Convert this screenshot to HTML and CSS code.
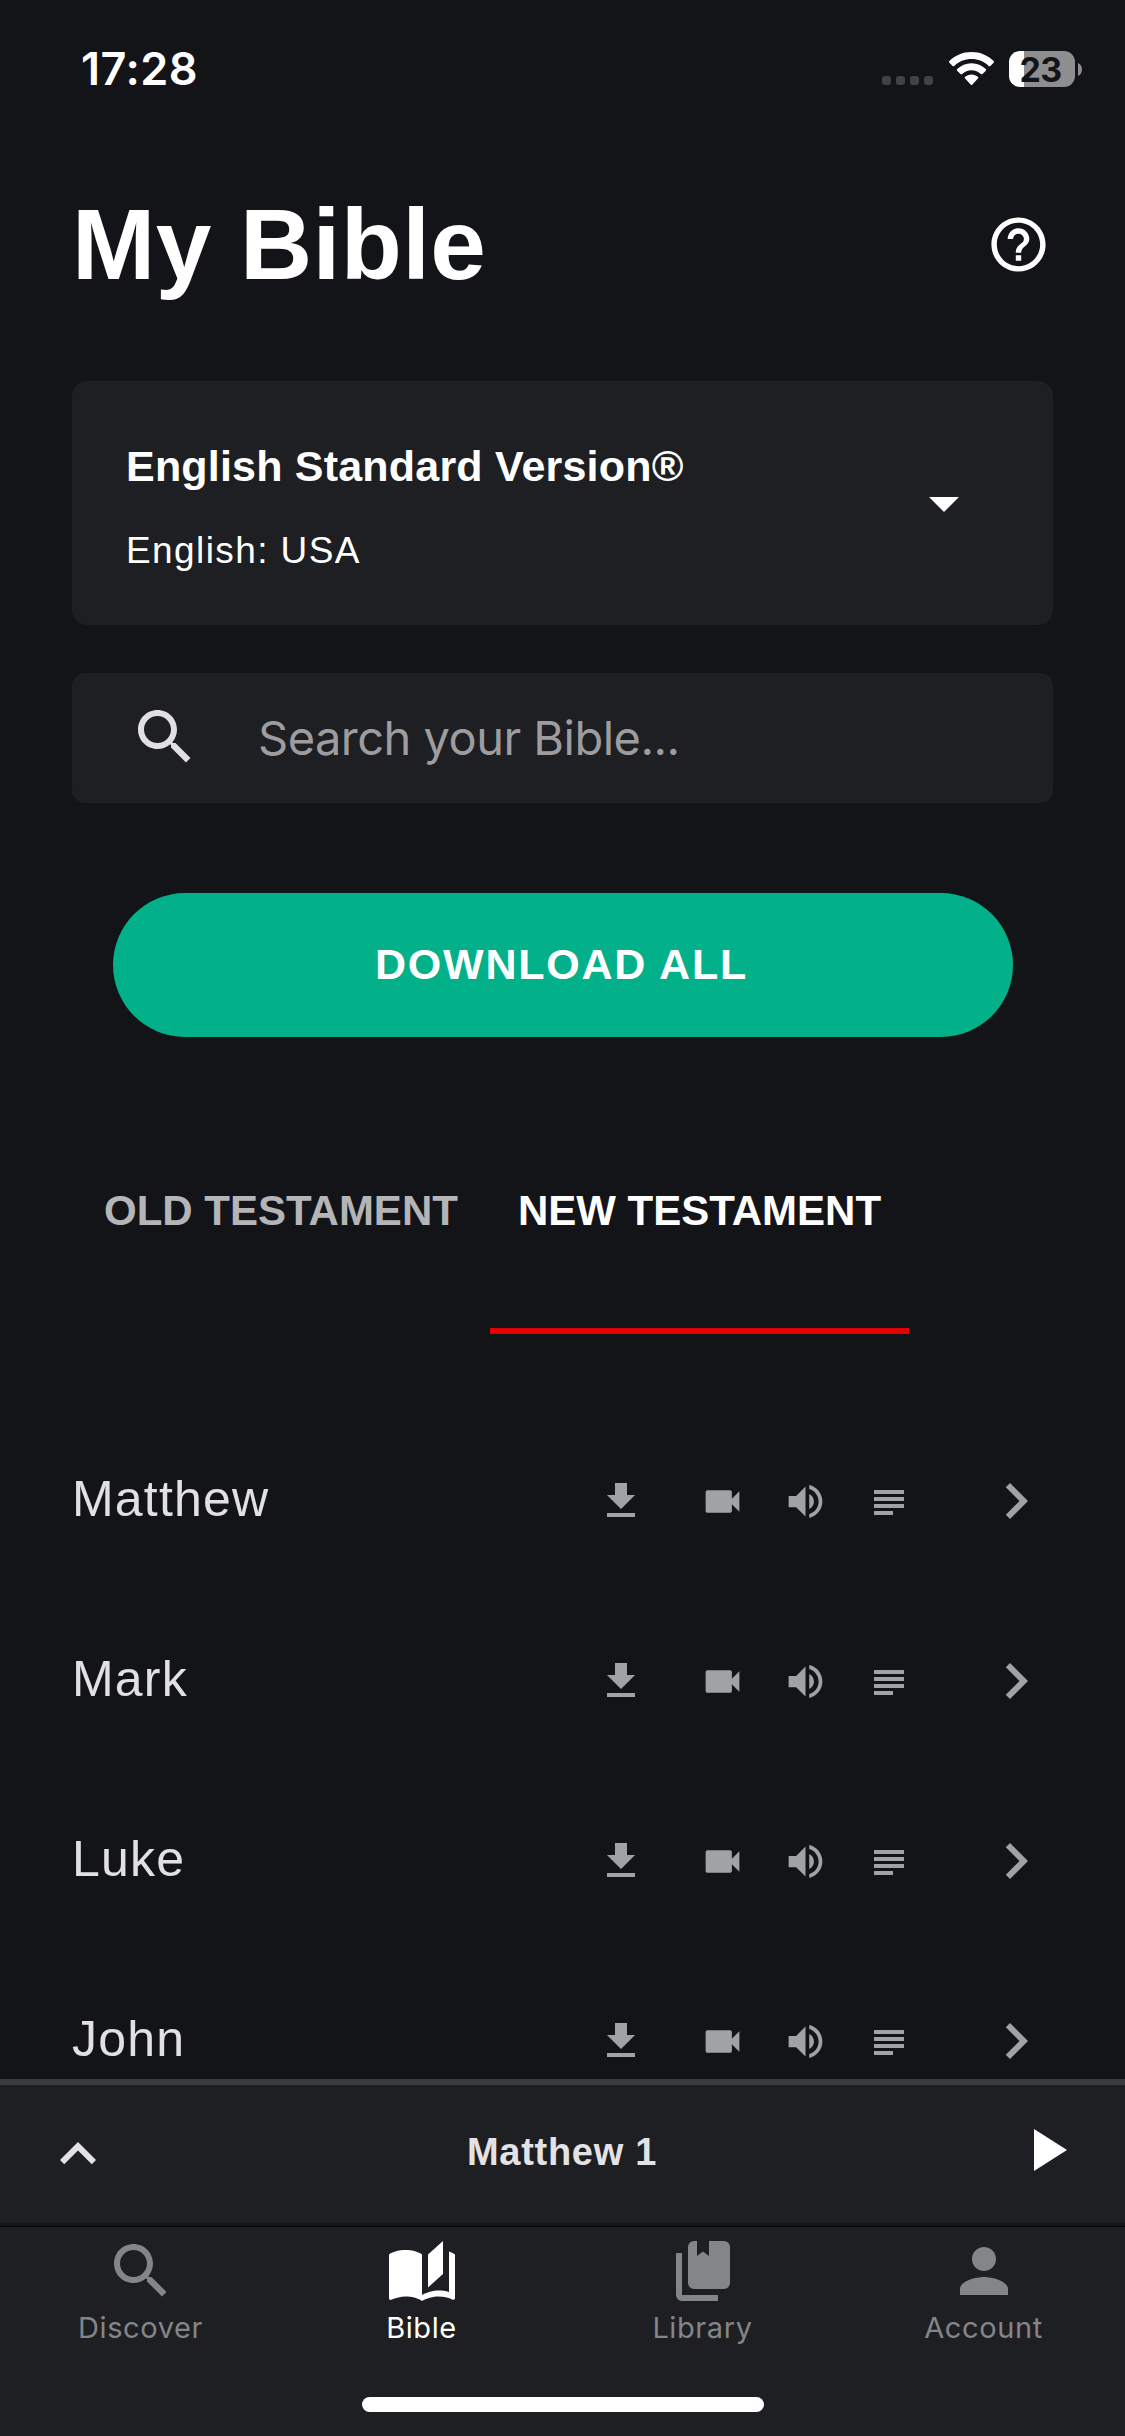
FILE: index.html
```html
<!DOCTYPE html>
<html lang="en">
<head>
<meta charset="utf-8">
<title>My Bible</title>
<link rel="stylesheet" href="styles.css">
</head>
<body>
<svg class="sprite" aria-hidden="true">
  <symbol id="download" viewBox="0 0 24 24"><path d="M19 9h-4V3H9v6H5l7 7 7-7zM5 18v2h14v-2H5z"/></symbol>
  <symbol id="video" viewBox="0 0 24 24"><path d="M17 10.5V7c0-.55-.45-1-1-1H4c-.55 0-1 .45-1 1v10c0 .55.45 1 1 1h12c.55 0 1-.45 1-1v-3.5l4 4v-11l-4 4z"/></symbol>
  <symbol id="volume" viewBox="0 0 24 24"><path d="M3 9v6h4l5 5V4L7 9H3zm13.5 3c0-1.770-1.020-3.290-2.500-4.030v8.050c1.480-.730 2.500-2.250 2.500-4.020zM14 3.230v2.060c2.890.860 5 3.540 5 6.710s-2.110 5.850-5 6.710v2.060c4.010-.910 7-4.490 7-8.770s-2.990-7.860-7-8.770z"/></symbol>
  <symbol id="lines" viewBox="0 0 30 25"><path d="M0 0h30v4H0zM0 7h30v4H0zM0 14h30v4H0zM0 21h19v4H0z"/></symbol>
  <symbol id="chevron" viewBox="0 0 24 24"><path d="M10 6L8.590 7.410 13.170 12l-4.580 4.590L10 18l6-6z"/></symbol>
  <symbol id="search" viewBox="0 0 24 24"><path d="M15.500 14h-.790l-.280-.270C15.410 12.590 16 11.110 16 9.500 16 5.910 13.090 3 9.500 3S3 5.910 3 9.500 5.910 16 9.500 16c1.610 0 3.090-.590 4.230-1.570l.270.280v.790l5 4.990L20.490 19l-4.990-5zm-6 0C7.010 14 5 11.990 5 9.500S7.010 5 9.500 5 14 7.010 14 9.500 11.990 14 9.500 14z"/></symbol>
</svg>

<div class="screen">
  <div class="status">
    <span class="time">17:28</span>
    <div class="status-icons">
      <div class="dots"><i></i><i></i><i></i><i></i></div>
      <svg class="wifi" viewBox="0 0 45 33">
        <path d="M22.500 0C31.200 0 39 3.400 44.600 9a1.200 1.200 0 0 1 0 1.700l-3.200 3.200a1.200 1.200 0 0 1-1.700 0C35.200 9.600 29.200 7 22.500 7S9.800 9.600 5.300 13.900a1.200 1.200 0 0 1-1.700 0L.4 10.700A1.200 1.200 0 0 1 .4 9C6 3.400 13.800 0 22.500 0z"/>
        <path d="M22.500 11.200c5.600 0 10.600 2.200 14.300 5.800a1.200 1.200 0 0 1 0 1.700l-3.300 3.200a1.200 1.200 0 0 1-1.600 0c-2.500-2.300-5.800-3.700-9.400-3.700s-6.900 1.400-9.400 3.700a1.200 1.200 0 0 1-1.600 0l-3.300-3.200a1.200 1.200 0 0 1 0-1.700c3.700-3.600 8.700-5.800 14.300-5.800z"/>
        <path d="M22.500 22.400c2.500 0 4.700.9 6.400 2.400a1.200 1.200 0 0 1 0 1.700l-5.500 5.900a1.200 1.200 0 0 1-1.800 0l-5.500-5.900a1.200 1.200 0 0 1 0-1.700c1.700-1.500 3.900-2.400 6.400-2.400z"/>
      </svg>
      <div class="battery-wrap">
        <div class="battery">23</div>
        <svg class="nub" viewBox="0 0 4 13"><path d="M0 0c2.400 1 4 3.500 4 6.500S2.400 12 0 13z"/></svg>
      </div>
    </div>
  </div>

  <header class="header">
    <h1>My Bible</h1>
    <svg class="help" viewBox="0 0 24 24"><path d="M11 18h2v-2h-2v2zm1-16C6.480 2 2 6.480 2 12s4.480 10 10 10 10-4.480 10-10S17.520 2 12 2zm0 18c-4.410 0-8-3.590-8-8s3.590-8 8-8 8 3.590 8 8-3.590 8-8 8zm0-14c-2.210 0-4 1.790-4 4h2c0-1.100.9-2 2-2s2 .9 2 2c0 2-3 1.750-3 5h2c0-2.250 3-2.500 3-5 0-2.210-1.790-4-4-4z"/></svg>
  </header>

  <section class="version">
    <div class="version-text">
      <div class="version-name">English Standard Version®</div>
      <div class="version-lang">English: USA</div>
    </div>
    <svg class="caret" viewBox="0 0 30 15"><path d="M0 0h30L15 15z"/></svg>
  </section>

  <section class="search">
    <svg class="icon72"><use href="#search"/></svg>
    <span class="placeholder">Search your Bible...</span>
  </section>

  <div class="download-all">DOWNLOAD ALL</div>

  <div class="tabs">
    <div class="tab">OLD TESTAMENT</div>
    <div class="tab tab-active">NEW TESTAMENT</div>
  </div>

  <main class="books">
    <div class="book">
      <span class="book-name">Matthew</span>
      <svg class="i-download"><use href="#download"/></svg><svg class="i-video"><use href="#video"/></svg><svg class="i-volume"><use href="#volume"/></svg><svg class="i-lines"><use href="#lines"/></svg><svg class="icon72"><use href="#chevron"/></svg>
    </div>
    <div class="book">
      <span class="book-name">Mark</span>
      <svg class="i-download"><use href="#download"/></svg><svg class="i-video"><use href="#video"/></svg><svg class="i-volume"><use href="#volume"/></svg><svg class="i-lines"><use href="#lines"/></svg><svg class="icon72"><use href="#chevron"/></svg>
    </div>
    <div class="book">
      <span class="book-name">Luke</span>
      <svg class="i-download"><use href="#download"/></svg><svg class="i-video"><use href="#video"/></svg><svg class="i-volume"><use href="#volume"/></svg><svg class="i-lines"><use href="#lines"/></svg><svg class="icon72"><use href="#chevron"/></svg>
    </div>
    <div class="book">
      <span class="book-name">John</span>
      <svg class="i-download"><use href="#download"/></svg><svg class="i-video"><use href="#video"/></svg><svg class="i-volume"><use href="#volume"/></svg><svg class="i-lines"><use href="#lines"/></svg><svg class="icon72"><use href="#chevron"/></svg>
    </div>
  </main>

  <div class="player">
    <svg class="icon72 up" viewBox="0 0 24 24"><path d="M12 8l-6 6 1.410 1.410L12 10.830l4.590 4.580L18 14z"/></svg>
    <span class="player-title">Matthew 1</span>
    <svg class="icon72 play" viewBox="0 0 24 24"><path d="M8 5v14l11-7z"/></svg>
  </div>

  <footer class="bottom">
    <nav class="nav">
      <div class="nav-item"><svg class="icon72"><use href="#search"/></svg><span>Discover</span></div>
      <div class="nav-item nav-active"><svg class="icon72" viewBox="0 0 24 24"><path d="M19 2L14 6.500V17.500L19 13V2M6.500 5C4.550 5 2.450 5.400 1 6.500V21.160C1 21.410 1.250 21.660 1.500 21.660C1.600 21.660 1.650 21.590 1.750 21.590C3.100 20.940 5.050 20.500 6.500 20.500C8.450 20.500 10.550 20.900 12 22C13.350 21.150 15.800 20.500 17.500 20.500C19.150 20.500 20.850 20.810 22.250 21.560C22.350 21.610 22.400 21.590 22.500 21.590C22.750 21.590 23 21.340 23 21.090V6.500C22.400 6.050 21.750 5.750 21 5.500V19C19.900 18.650 18.700 18.500 17.500 18.500C15.800 18.500 13.350 19.150 12 20V6.500C10.550 5.400 8.450 5 6.500 5Z"/></svg><span>Bible</span></div>
      <div class="nav-item"><svg class="icon72" viewBox="0 0 24 24"><path d="M19 18H9A2 2 0 0 1 7 16V4A2 2 0 0 1 9 2H10V7L12 5.500L14 7V2H19A2 2 0 0 1 21 4V16A2 2 0 0 1 19 18M17 20V22H5A2 2 0 0 1 3 20V6H5V20H17Z"/></svg><span>Library</span></div>
      <div class="nav-item"><svg class="icon72" viewBox="0 0 24 24"><path d="M12 12c2.210 0 4-1.790 4-4s-1.790-4-4-4-4 1.790-4 4 1.790 4 4 4zm0 2c-2.670 0-8 1.340-8 4v2h16v-2c0-2.660-5.330-4-8-4z"/></svg><span>Account</span></div>
    </nav>
    <div class="home-indicator"></div>
  </footer>
</div>
</body>
</html>
```
FILE: styles.css
```css
* { box-sizing: border-box; }
body { margin: 0; background: #131418; }
svg { display: block; fill: currentColor; flex: none; }
.sprite { display: none; }
.icon72 { width: 72px; height: 72px; }

.screen {
  display: flex;
  flex-direction: column;
  width: 1125px;
  height: 2436px;
  overflow: hidden;
  background: #131418;
  color: #fff;
  font-family: "Liberation Sans", Arial, sans-serif;
}

/* Status bar */
.status {
  display: flex;
  justify-content: space-between;
  height: 132px;
  padding: 0 43px 0 81px;
  font-family: Inter, sans-serif;
}
.time { margin-top: 42px; font-size: 45px; line-height: 54px; font-weight: 600; letter-spacing: 0.5px; }
.status-icons { display: flex; align-items: flex-start; }
.dots { display: flex; gap: 5px; margin-top: 76px; }
.dots i { width: 9px; height: 9px; border-radius: 3px; background: #414246; }
.wifi { width: 45px; height: 33px; margin: 52px 15px 0 16px; }
.battery-wrap { display: flex; align-items: center; gap: 3px; height: 36px; margin-top: 51px; }
.battery {
  width: 66px;
  height: 36px;
  padding-right: 3px;
  border-radius: 11px;
  background: linear-gradient(90deg, #fff 15px, #8e8e91 15px);
  color: #131418;
  font-size: 34px;
  line-height: 37px;
  font-weight: 700;
  letter-spacing: -0.8px;
  text-align: center;
}
.nub { width: 4px; height: 13px; color: #8e8e91; }

/* Title */
.header { display: flex; align-items: center; justify-content: space-between; height: 249px; padding: 0 74px 25px 72px; }
h1 { margin: 0; font-size: 100px; line-height: 116px; font-weight: 700; letter-spacing: 0.4px; }
.help { width: 65px; height: 65px; }

/* Version picker */
.version {
  display: flex;
  align-items: center;
  justify-content: space-between;
  height: 244px;
  margin: 0 72px;
  padding: 0 94px 0 54px;
  border-radius: 15px;
  background: #1e1f22;
}
.version-name { font-size: 43px; line-height: 50px; font-weight: 700; letter-spacing: 0.2px; }
.version-lang { margin-top: 38px; font-size: 37px; line-height: 44px; letter-spacing: 1.4px; }
.version-text { margin-top: 8px; }
.caret { width: 30px; height: 15px; margin-top: 3px; }

.search {
  display: flex;
  align-items: center;
  gap: 57px;
  height: 130px;
  margin: 48px 72px 0;
  padding: 0 57px 2px;
  border-radius: 13px;
  background: #1e1f22;
  color: #e0e0e2;
}
.placeholder { padding-top: 2px; font-family: Inter, sans-serif; font-size: 47px; line-height: 56px; letter-spacing: -0.52px; color: #9d9da0; }

.download-all {
  height: 144px;
  margin: 90px 112px 0 113px;
  padding-right: 3px;
  border-radius: 72px;
  background: #02b18a;
  font-size: 43px;
  line-height: 142px;
  font-weight: 700;
  letter-spacing: 1.75px;
  text-align: center;
}

/* Testament tabs */
.tabs { display: flex; gap: 4px; margin: 121px 76px 0; }
.tab { height: 176px; padding: 28px 28px 0; font-size: 42px; line-height: 50px; font-weight: 700; color: #b5b5b8; }
.tab-active { border-bottom: 6px solid #e50000; color: #fff; }

/* Book list */
.books { flex: 1; min-height: 0; padding-top: 77px; overflow: hidden; }
.book { display: flex; align-items: center; height: 180px; padding: 0 73px 0 72px; color: #a1a2a4; }
.book-name { flex: 1; margin-top: -4px; font-size: 50px; line-height: 58px; letter-spacing: 1.2px; color: #e1e1e3; }
.i-download { width: 48px; height: 48px; margin-right: 55px; }
.i-video { width: 45px; height: 45px; margin-right: 38px; }
.i-volume { width: 45px; height: 45px; margin-right: 46px; }
.i-lines { width: 30px; height: 25px; margin: 3px 76px 0 0; }

/* Mini player */
.player {
  display: flex;
  align-items: center;
  justify-content: space-between;
  height: 147px;
  padding: 0 43px 6px 42px;
  border-top: 6px solid #3a3b3f;
  border-bottom: 3px solid #151619;
  background: #1e1f22;
  color: #e3e3e5;
}
.player-title { margin-top: 1px; font-size: 38px; line-height: 44px; font-weight: 700; letter-spacing: 0.7px; }
.up { margin-top: 6px; }
.play { margin-top: -2px; color: #fff; }

/* Bottom navigation */
.bottom { height: 210px; border-top: 1px solid #000; background: #1e1f22; }
.nav { display: grid; grid-template-columns: repeat(4, 281px); height: 170px; padding-top: 8px; }
.nav-item { display: flex; flex-direction: column; align-items: center; color: #848588; }
.nav-item span { margin-top: 3px; font-family: Inter, sans-serif; font-size: 29px; line-height: 36px; letter-spacing: 0.6px; }
.nav-active { color: #fff; }
.home-indicator { width: 402px; height: 15px; margin: 0 auto; border-radius: 8px; background: #fff; }
```
